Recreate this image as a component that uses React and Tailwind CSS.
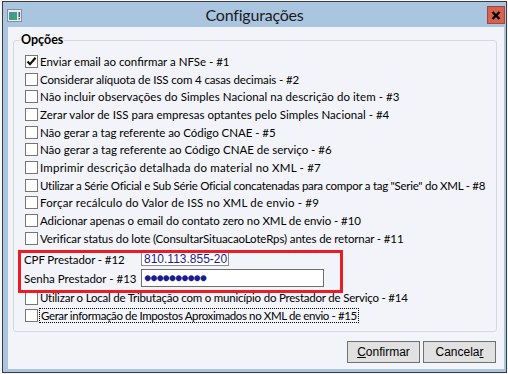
import React from 'react';

const opcoes = [
  { label: 'Enviar email ao confirmar a NFSe - #1', checked: true, fit: 'tracking-[0px]' },
  { label: 'Considerar alíquota de ISS com 4 casas decimais  - #2', fit: 'tracking-[-0.13px]' },
  { label: 'Não incluir observações do Simples Nacional na descrição do item - #3', fit: 'tracking-[0.07px]' },
  { label: 'Zerar valor de ISS para empresas optantes pelo Simples Nacional  - #4', fit: 'tracking-[0.03px]' },
  { label: 'Não gerar a tag referente ao Código CNAE - #5', fit: 'tracking-[-0.04px]' },
  { label: 'Não gerar a tag referente ao Código CNAE de serviço - #6', fit: 'tracking-[0px]' },
  { label: 'Imprimir descrição detalhada do material no XML - #7', fit: 'tracking-[0.2px]' },
  { label: 'Utilizar a Série Oficial e Sub Série Oficial concatenadas para compor a tag "Serie" do XML - #8', fit: 'tracking-[-0.27px]' },
  { label: 'Forçar recálculo do Valor de ISS no XML de envio - #9', fit: 'tracking-[0.17px]' },
  { label: 'Adicionar apenas o email do contato zero no XML de envio - #10', fit: 'tracking-[-0.08px]' },
  { label: 'Verificar status do lote (ConsultarSituacaoLoteRps) antes de retornar - #11', fit: 'tracking-[-0.13px]' },
];

function CheckBox({ checked }) {
  return (
    <span className="w-[13px] h-[13px] border border-[#767676] bg-white flex items-center justify-center shrink-0">
      {checked && (
        <svg width="11" height="11" viewBox="0 0 11 11">
          <path d="M1.5 5.5 L4 8.2 L9.5 1.8" fill="none" stroke="#111" strokeWidth="2.2" />
        </svg>
      )}
    </span>
  );
}

function Row({ label, checked, focused, fit = '', className = 'h-[17.7px]' }) {
  return (
    <div className={`flex items-center ${className}`}>
      <span className="ml-[11px]">
        <CheckBox checked={checked} />
      </span>
      {focused ? (
        <span className={`ml-[1px] pl-[1px] pr-[1px] border border-dotted border-black leading-[13px] whitespace-nowrap ${fit}`}>{label}</span>
      ) : (
        <span className={`ml-[2px] whitespace-nowrap ${fit}`}>{label}</span>
      )}
    </div>
  );
}

function AppIcon() {
  return (
    <svg width="15" height="13" viewBox="0 0 15 13">
      <rect x="0.5" y="0.5" width="14" height="12" fill="#e8eaee" stroke="#8a8f98" />
      <defs>
        <linearGradient id="g" x1="0" y1="0" x2="1" y2="1">
          <stop offset="0" stopColor="#4a8fa8" />
          <stop offset="1" stopColor="#3aa860" />
        </linearGradient>
      </defs>
      <rect x="2" y="3" width="8" height="8" fill="url(#g)" />
      <rect x="11.5" y="3" width="1.5" height="5" fill="#2f5f8a" />
      <rect x="11.5" y="9" width="1.5" height="1.5" fill="#2f5f8a" />
    </svg>
  );
}

export default function App() {
  return (
    <div className="relative w-[508px] h-[374px] bg-[#f6f6f6] pt-[1px] pl-[2px] overflow-hidden font-['Lato',sans-serif] text-[11.5px] text-black">
      <div className="w-[505px] h-[372px] border border-[#3b3b3b] bg-[#aac5df] flex flex-col">
        <div className="h-[25px] grid grid-cols-[1fr_auto_1fr] items-center">
          <div className="pl-[4px] pt-[1px] justify-self-start flex">
            <AppIcon />
          </div>
          <div className="text-[16px] text-[#1b1b1b] font-['Lato',sans-serif] tracking-[-0.2px]">Configurações</div>
          <div className="justify-self-end pr-[1px] pt-[1px]">
            <div className="w-[18px] h-[18px] bg-[#d3634f] border border-[#a84536] flex items-center justify-center">
              <svg width="10" height="9" viewBox="0 0 10 9">
                <path d="M1.5 1 L8.5 8 M8.5 1 L1.5 8" stroke="#000" strokeWidth="2.4" />
              </svg>
            </div>
          </div>
        </div>
        <div className="ml-[5px] mr-[2px] mb-[3px] flex-1 bg-[#f3f4f9] flex flex-col">
          <div className="relative ml-[5px] mr-[7px] mt-[13px] h-[292px] border border-[#d4d8e0] rounded-[3px] pt-[11.6px]">
            <span className="absolute left-[6px] top-[-9px] px-[1px] bg-[#f3f4f9] font-bold text-[12.5px] leading-[16px]">Opções</span>
            {opcoes.map((o) => (
              <Row key={o.label} label={o.label} checked={o.checked} fit={o.fit} />
            ))}
            <div className="mt-[4px] h-[16px] flex items-center">
              <span className="ml-[10px] w-[117px] whitespace-nowrap tracking-[-0.1px]">CPF Prestador - #12</span>
              <div className="w-[88px] h-[14px] border border-[#8e8e8e] bg-white flex items-center pl-[2px] text-[#1c1c8f] font-['Liberation_Sans',sans-serif] text-[12px] leading-none">
                810.113.855-20
              </div>
            </div>
            <div className="mt-[1px] h-[20px] flex items-center">
              <span className="ml-[10px] w-[117px] whitespace-nowrap">Senha Prestador - #13</span>
              <div className="w-[183px] h-[18px] border border-[#6f6f6f] bg-white flex items-center pl-[2px] text-[#1c1c8f] text-[12px] leading-none tracking-[-1px]">
                ●●●●●●●●●●
              </div>
            </div>
            <Row className="mt-[1px] h-[17.7px]" fit="tracking-[-0.21px]" label="Utilizar o Local de Tributação com o município do Prestador de Serviço - #14" />
            <Row fit="tracking-[-0.38px]" label="Gerar informação de Impostos Aproximados no XML de envio - #15" focused />
          </div>
          <div className="mt-[9px] pr-[8px] flex justify-end gap-[3px] font-['Liberation_Sans',sans-serif] text-[12px]">
            <button className="w-[73px] h-[22px] bg-[#e1e1e1] border border-[#707070]">
              <span className="underline">C</span>onfirmar
            </button>
            <button className="w-[73px] h-[22px] bg-[#e1e1e1] border border-[#707070]">
              Cancela<span className="underline">r</span>
            </button>
          </div>
        </div>
      </div>
      <div className="absolute left-[18px] top-[250px] w-[325px] h-[43px] border-[3px] border-[#ec1c24]" />
    </div>
  );
}
